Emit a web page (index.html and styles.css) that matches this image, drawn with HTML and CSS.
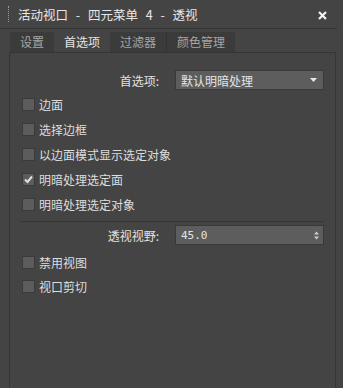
FILE: index.html
```html
<!DOCTYPE html>
<html lang="zh-CN">
<head>
    <meta charset="UTF-8">
    <title>活动视口 - 四元菜单 4 - 透视</title>
    <link rel="stylesheet" href="styles.css">
</head>
<body>
    <div class="titlebar">
        <span class="grip"></span>
        <span class="title">活动视口 - 四元菜单 4 - 透视</span>
        <span class="close">
            <svg width="9" height="9" viewBox="0 0 9 9"><path d="M1 1 L8 8 M8 1 L1 8" stroke="#f2f2f2" stroke-width="2.2"/></svg>
        </span>
    </div>
    <div class="tabs">
        <div class="tab">设置</div>
        <div class="tab active">首选项</div>
        <div class="tab">过滤器</div>
        <div class="tab sep">颜色管理</div>
    </div>
    <div class="panel">
        <div class="field-row">
            <label class="field-label">首选项:</label>
            <div class="dropdown">
                <span>默认明暗处理</span>
                <svg width="7" height="4" viewBox="0 0 7 4"><path d="M0 0 H7 L3.5 4 Z" fill="#e8e8e8"/></svg>
            </div>
        </div>
        <div class="checks">
            <div class="check"><span class="box"></span>边面</div>
            <div class="check"><span class="box"></span>选择边框</div>
            <div class="check"><span class="box"></span>以边面模式显示选定对象</div>
            <div class="check"><span class="box"><svg width="11" height="11" viewBox="0 0 11 11"><path d="M2 5.5 L4.5 8 L9 2.5" fill="none" stroke="#e0e0e0" stroke-width="2"/></svg></span>明暗处理选定面</div>
            <div class="check"><span class="box"></span>明暗处理选定对象</div>
        </div>
        <div class="divider"></div>
        <div class="field-row">
            <label class="field-label">透视视野:</label>
            <div class="dropdown spinner">
                <span class="num">45.0</span>
                <svg width="5" height="9" viewBox="0 0 5 9"><path d="M0 3.5 L2.5 0.5 L5 3.5 Z M0 5.5 L2.5 8.5 L5 5.5 Z" fill="#cfcfcf"/></svg>
            </div>
        </div>
        <div class="checks lower">
            <div class="check"><span class="box"></span>禁用视图</div>
            <div class="check"><span class="box"></span>视口剪切</div>
        </div>
    </div>
</body>
</html>
```

FILE: styles.css
```css
* {
    box-sizing: border-box;
}
body {
    margin: 0;
    height: 388px;
    overflow: hidden;
    background-color: #444444;
    color: #dedede;
    font-family: "Noto Sans CJK SC", "DejaVu Sans", sans-serif;
    font-size: 12px;
}
.titlebar {
    display: flex;
    align-items: center;
    height: 29px;
    margin-right: 6px;
    padding-left: 8px;
    border-bottom: 1px solid #363636;
}
.grip {
    width: 2px;
    height: 16px;
    margin-right: 8px;
    border-left: 1px dotted #9a9a9a;
}
.title {
    color: #e8e8e8;
    font-size: 12.5px;
    word-spacing: 5px;
}
.close {
    margin-left: auto;
    margin-right: 10px;
    margin-top: 2px;
    display: flex;
}
.tabs {
    display: flex;
    height: 20px;
    margin: 3px 0 0 10px;
}
.tab {
    padding: 0 10px;
    line-height: 20px;
    background-color: #3b3b3b;
    color: #a6a6a6;
}
.tab.active {
    background-color: #444444;
    color: #e4e4e4;
}
.tab.sep {
    border-left: 1px solid #333333;
}
.panel {
    height: 336px;
    margin: 0 7px 0 9px;
    padding-top: 17px;
    border: 1px solid #353535;
    border-bottom: none;
}
.field-row {
    display: flex;
    align-items: center;
}
.field-label {
    width: 153px;
    padding-right: 4px;
    text-align: right;
    color: #e0e0e0;
}
.dropdown {
    display: flex;
    align-items: center;
    justify-content: space-between;
    width: 149px;
    height: 20px;
    margin-left: 12px;
    padding: 0 6px 0 5px;
    background-color: #5d5d5d;
    border: 1px solid #393939;
    color: #e4e4e4;
}
.spinner {
    padding-right: 4px;
}
.num {
    font-family: "DejaVu Sans Mono", monospace;
    font-size: 11px;
}
.checks {
    padding: 2px 0 0 12px;
}
.check {
    display: flex;
    align-items: center;
    height: 25px;
}
.box {
    display: flex;
    align-items: center;
    justify-content: center;
    width: 13px;
    height: 13px;
    margin-right: 4px;
    background-color: #5c5c5c;
    border: 1px solid #3a3a3a;
}
.divider {
    height: 1px;
    margin: 4px 11px 3px 10px;
    background-color: #363636;
}
.checks.lower {
    padding-top: 5px;
}
.checks.lower .check {
    height: 24px;
}
```
